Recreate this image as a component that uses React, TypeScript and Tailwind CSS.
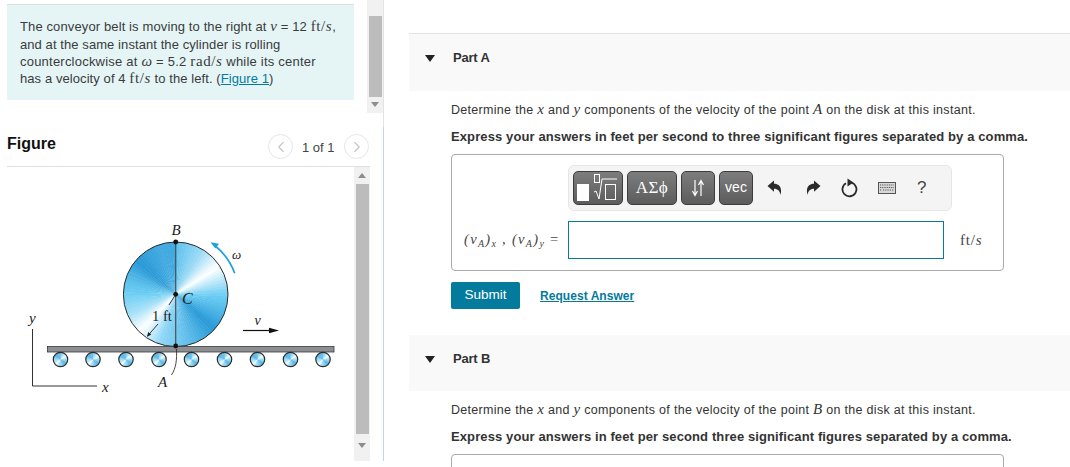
import React from "react";
import { ChevronLeft, ChevronRight } from "lucide-react";

const M = ({ children, roman }: { children: React.ReactNode; roman?: boolean }) => (
  <span className={`font-['Liberation_Serif'] text-[15px] leading-none ${roman ? "tracking-[0.6px]" : "italic"}`}>{children}</span>
);

// conic shading drawn as thin wedges, colours sampled from the disc
const stops: [number, string][] = [
  [0, "#63c4ee"],
  [30, "#9fdcf6"],
  [55, "#ffffff"],
  [72, "#b5e6fa"],
  [90, "#6ccdf3"],
  [105, "#55bdea"],
  [130, "#2a9ad8"],
  [165, "#66c1ec"],
  [195, "#8ed6f6"],
  [222, "#ffffff"],
  [245, "#a5e0f9"],
  [270, "#6ccdf3"],
  [285, "#5abfec"],
  [308, "#2b9ad6"],
  [340, "#45abe2"],
  [359.9, "#3fa8e0"],
  [360, "#63c4ee"],
];

const hex = (c: string) => [1, 3, 5].map((i) => parseInt(c.slice(i, i + 2), 16));

const colorAt = (a: number) => {
  for (let i = 0; i < stops.length - 1; i++) {
    const [a0, c0] = stops[i];
    const [a1, c1] = stops[i + 1];
    if (a >= a0 && a <= a1) {
      const t = (a - a0) / (a1 - a0);
      const p = hex(c0);
      const q = hex(c1);
      return `rgb(${p.map((v, k) => Math.round(v + (q[k] - v) * t)).join(",")})`;
    }
  }
  return "#63c4ee";
};

const Wheel = ({ cx, cy, r, stroke = 1 }: { cx: number; cy: number; r: number; stroke?: number }) => {
  const step = 4;
  const wedges = [];
  for (let a = 0; a < 360; a += step) {
    const a0 = ((a - 90) * Math.PI) / 180;
    const a1 = ((a + step + 0.6 - 90) * Math.PI) / 180;
    wedges.push(
      <path
        key={a}
        d={`M${cx} ${cy}L${cx + r * Math.cos(a0)} ${cy + r * Math.sin(a0)}A${r} ${r} 0 0 1 ${cx + r * Math.cos(a1)} ${cy + r * Math.sin(a1)}Z`}
        fill={colorAt(a)}
      />
    );
  }
  return (
    <g>
      {wedges}
      <circle cx={cx} cy={cy} r={r} fill="none" stroke="#2b2b2b" strokeWidth={stroke} />
    </g>
  );
};

const FigureArt = () => (
  <svg width="354" height="293" viewBox="0 167 354 293" className="shrink-0">
    <g fontFamily="Liberation Serif" fill="#222">
      <Wheel cx={175.7} cy={294.3} r={52.3} />
      <line x1="175.7" y1="242" x2="175.7" y2="346" stroke="#4a4f52" strokeWidth="1.2" />
      <rect x="47.5" y="346.5" width="286.5" height="5.5" fill="#8c8f91" stroke="#3a3a3a" strokeWidth="0.8" />
      {[60.5, 93, 126, 159, 191.5, 224.5, 257.5, 290.5, 323].map((x) => (
        <Wheel key={x} cx={x} cy={359.5} r={7.2} stroke={1.2} />
      ))}
      <circle cx="175.7" cy="242" r="2.4" fill="#111" />
      <circle cx="175.7" cy="294.3" r="2.4" fill="#111" />
      <circle cx="175.7" cy="346" r="2.4" fill="#111" />
      <path d="M175.7 294.3L169 305" stroke="#222" strokeWidth="0.9" fill="none" />
      <path d="M158 324L147.5 336" stroke="#222" strokeWidth="0.9" fill="none" />
      <path d="M147 337l1.2-5 3 2.6z" fill="#222" />
      <path d="M176.5 349C177 360 176 368 171.5 375" stroke="#333" strokeWidth="0.9" fill="none" />
      <path d="M234.7 273.3A62 62 0 0 0 214 245" stroke="#1ea0dc" strokeWidth="1.7" fill="none" />
      <path d="M210.5 242.2l8.5 1.6-3.6 4.8z" fill="#1ea0dc" />
      <path d="M32.5 329V386H97" stroke="#333" strokeWidth="1" fill="none" />
      <path d="M243 330.5H271" stroke="#111" strokeWidth="1.2" />
      <path d="M279 330.5l-10-2.8v5.6z" fill="#111" />
      <text x="171.5" y="235" fontSize="15" fontStyle="italic">B</text>
      <text x="182" y="304" fontSize="16" fontStyle="italic">C</text>
      <text x="152" y="321" fontSize="14.5">1 ft</text>
      <text x="232" y="259" fontSize="13" fontStyle="italic">ω</text>
      <text x="254.5" y="325" fontSize="14" fontStyle="italic">v</text>
      <text x="29" y="323" fontSize="15" fontStyle="italic">y</text>
      <text x="102" y="392" fontSize="15" fontStyle="italic">x</text>
      <text x="158" y="387" fontSize="15" fontStyle="italic">A</text>
    </g>
  </svg>
);

const ToolButton = ({ w, children }: { w: string; children: React.ReactNode }) => (
  <div
    className={`${w} h-[34px] rounded-[5px] border border-[#3d3d3d] bg-gradient-to-b from-[#7d7d7d] to-[#5c5c5c] flex items-center justify-center text-white`}
  >
    {children}
  </div>
);

const Arrow = ({ dir }: { dir: "up" | "down" }) => (
  <div
    className={`w-0 h-0 border-x-[4px] border-x-transparent ${dir === "up" ? "border-b-[5px] border-b-[#8d8d8d]" : "border-t-[5px] border-t-[#8d8d8d]"}`}
  />
);

const CurvedArrow = ({ flip }: { flip?: boolean }) => (
  <svg width="15" height="16" viewBox="0 0 15 16" className={flip ? "-scale-x-100" : ""}>
    <path d="M0.5 6L7 0.5V3.8C12 3.8 15.5 7.5 13.5 15C12.8 11 10.8 8.8 7 8.8V11.8Z" fill="#2b2b2b" />
  </svg>
);

const PartHeader = ({ label, border }: { label: string; border?: boolean }) => (
  <div
    className={`${border ? "h-[58px] border-t border-[#e2e2e2]" : "h-[56px]"} bg-[#f9f9f9] flex pl-[16px] pt-[17px]`}
  >
    <div className="mt-[4px] w-0 h-0 border-x-[5.5px] border-x-transparent border-t-[7px] border-t-[#222]" />
    <span className="ml-[18px] text-[13px] font-bold leading-[14px] text-[#333] tracking-[-0.2px]">{label}</span>
  </div>
);

const Prompt = ({ point, text }: { point: string; text: string }) => (
  <div className="pl-[42px] text-[#333]">
    <p className="text-[12.5px] leading-[16px] tracking-[0.3px]">
      Determine the <M>x</M> and <M>y</M> components of the velocity of the point <M>{point}</M> on the disk at this instant.
    </p>
    <p className="mt-[11px] text-[13px] leading-[16px] font-bold tracking-[0.11px]">{text}</p>
  </div>
);

export default function App() {
  return (
    <div className="w-[1070px] h-[467px] overflow-hidden bg-white flex font-['Liberation_Sans',sans-serif]">
      <div className="w-[384px] shrink-0 flex flex-col h-[461px]">
        <div className="h-[127px] flex border-r border-[#e3e3e3]">
          <div className="ml-[7px] w-[347px] pt-[4px]">
            <div className="h-[96px] border-t border-[#dedede] bg-[#e5f5f6] pl-[13px] pt-[13px] text-[13px] text-[#3b3b3b] tracking-[0.08px]">
              <div className="h-[18px] leading-[18px] tracking-[0.12px]">
                The conveyor belt is moving to the right at <M>v</M> = 12 <M roman>ft/<i>s</i></M>,
              </div>
              <div className="h-[17px] leading-[17px]">and at the same instant the cylinder is rolling</div>
              <div className="h-[17px] leading-[17px] tracking-[0.22px]">
                counterclockwise at <M>ω</M> = 5.2 <M roman>rad/<i>s</i></M> while its center
              </div>
              <div className="h-[18px] leading-[18px]">
                has a velocity of 4 <M roman>ft/<i>s</i></M> to the left. (<span className="text-[#007c9e] underline">Figure 1</span>)
              </div>
            </div>
          </div>
          <div className="ml-[13px] w-[16px] h-[113px] bg-[#f1f1f1] flex flex-col items-center pt-[16px]">
            <div className="w-[13px] h-[81px] bg-[#bcbcbc]" />
            <div className="mt-[5px]">
              <Arrow dir="down" />
            </div>
          </div>
        </div>
        <div className="flex-1 min-h-0 border-r border-[#c3d6e8] flex flex-col">
          <div className="ml-[7px] w-[363px] h-[40px] shrink-0 border-b border-[#dfdfdf] flex items-start pt-[7px]">
            <span className="text-[16px] leading-[20px] font-bold text-[#111]">Figure</span>
            <div className="ml-auto mr-[1px] flex items-center">
              <div className="w-[25px] h-[25px] rounded-full border border-[#e6e6e6] flex items-center justify-center text-[#c4c4c4]">
                <ChevronLeft size={18} strokeWidth={1.5} />
              </div>
              <span className="ml-[9px] w-[42px] text-[13px] text-[#444] whitespace-nowrap mt-[2px]">1 of 1</span>
              <div className="w-[25px] h-[25px] rounded-full border border-[#e6e6e6] flex items-center justify-center text-[#c4c4c4]">
                <ChevronRight size={18} strokeWidth={1.5} />
              </div>
            </div>
          </div>
          <div className="flex flex-1 min-h-0">
            <FigureArt />
            <div className="w-[16px] bg-[#f1f1f1] flex flex-col items-center pt-[6px]">
              <Arrow dir="up" />
              <div className="mt-[6px] w-[13px] h-[250px] bg-[#bcbcbc]" />
              <div className="mt-[9px]">
                <Arrow dir="down" />
              </div>
            </div>
          </div>
        </div>
      </div>

      <div className="flex-1 pl-[25px] pt-[33px] min-w-0">
        <PartHeader label="Part A" border />
        <div className="mt-[11px]">
          <Prompt point="A" text="Express your answers in feet per second to three significant figures separated by a comma." />
        </div>
        <div className="ml-[42px] mt-[9px] w-[553px] h-[117px] rounded-[4px] border border-[#aaaaaa] pt-[10px]">
          <div className="ml-[116px] w-[384px] h-[46px] rounded-[6px] border border-[#e6e6e6] bg-[#f4f4f4] flex items-center pl-[4px]">
            <div className="flex gap-[4px]">
              <ToolButton w="w-[50px]">
                <svg width="42" height="28" viewBox="0 0 42 28">
                  <rect x="0" y="10" width="12" height="17" fill="#fff" />
                  <path d="M17 18l2-1 3 8 3-20h15" stroke="#fff" strokeWidth="1" fill="none" />
                  <rect x="17.5" y="0.5" width="5" height="8" stroke="#fff" fill="none" />
                  <rect x="28.5" y="10.5" width="10" height="15" stroke="#fff" fill="none" />
                </svg>
              </ToolButton>
              <ToolButton w="w-[50px]">
                <span className="font-['Liberation_Serif'] text-[17px] tracking-[0.5px]">ΑΣϕ</span>
              </ToolButton>
              <ToolButton w="w-[34px]">
                <svg width="14" height="18" viewBox="0 0 14 18">
                  <path d="M4 1V15M1.5 12L4 16.5 6.5 12M10 17V3M7.5 6L10 1.5 12.5 6" stroke="#fff" strokeWidth="1.2" fill="none" />
                </svg>
              </ToolButton>
              <ToolButton w="w-[34px]">
                <span className="text-[14px] leading-none -mt-[3px]">vec</span>
              </ToolButton>
            </div>
            <div className="ml-[14px]">
              <CurvedArrow />
            </div>
            <div className="ml-[24px]">
              <CurvedArrow flip />
            </div>
            <div className="ml-[19px]">
              <svg width="18" height="20" viewBox="0 0 18 20">
                <path d="M6 5.2A7 7 0 1 0 11.5 4.6" stroke="#2b2b2b" strokeWidth="1.8" fill="none" />
                <path d="M7.5 0.5L13.5 4.6 7.5 8.5Z" fill="#2b2b2b" />
              </svg>
            </div>
            <div className="ml-[20px]">
              <svg width="18" height="12" viewBox="0 0 18 12">
                <rect x="0.5" y="0.5" width="17" height="11" fill="#d8d8d8" stroke="#555" />
                <path d="M2 3h14M2 5.5h14M2 8h2M5 8h8M14 8h2" stroke="#555" strokeWidth="1.2" strokeDasharray="1 0.8" />
              </svg>
            </div>
            <span className="ml-[21px] text-[17px] text-[#444]">?</span>
          </div>
          <div className="mt-[10px] flex items-center">
            <div className="w-[116px] pl-[12px] whitespace-nowrap font-['Liberation_Serif'] text-[14.5px] italic text-[#444] tracking-[1.3px]">
              (v<sub className="text-[10px]">A</sub>)<sub className="text-[10px]">x</sub> , (v<sub className="text-[10px]">A</sub>)<sub className="text-[10px]">y</sub> <span className="not-italic">=</span>
            </div>
            <div className="w-[376px] h-[38px] border border-[#047d9c] bg-white" />
            <span className="ml-[16px] font-['Liberation_Serif'] text-[15px] text-[#444] tracking-[0.8px]">ft/<i>s</i></span>
          </div>
        </div>
        <div className="ml-[42px] mt-[11px] flex items-center">
          <div className="w-[69px] h-[27px] rounded-[2px] bg-[#047a9c] text-white text-[13.5px] flex items-center justify-center">Submit</div>
          <span className="ml-[20px] text-[12px] font-bold text-[#047a9c] underline tracking-[0.05px]">Request Answer</span>
        </div>
        <div className="mt-[26px]">
          <PartHeader label="Part B" />
        </div>
        <div className="mt-[11px]">
          <Prompt point="B" text="Express your answers in feet per second three significant figures separated by a comma." />
        </div>
        <div className="ml-[42px] mt-[9px] w-[553px] h-[20px] rounded-t-[4px] border border-[#aaaaaa]" />
      </div>
    </div>
  );
}
